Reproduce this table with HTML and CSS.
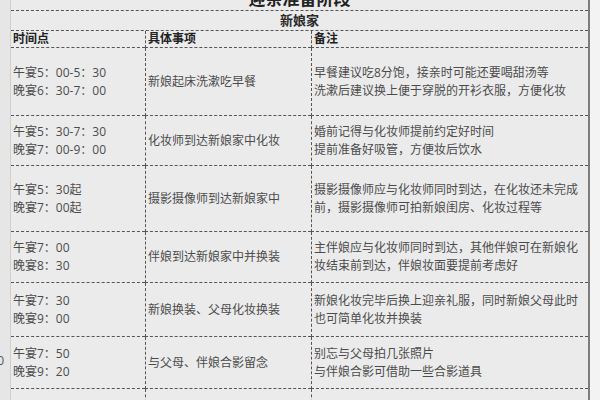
FILE: index.html
```html
<!DOCTYPE html>
<html lang="zh">
<head>
<meta charset="utf-8">
<link rel="stylesheet" href="styles.css">
</head>
<body>
<div class="sheet">
  <div class="gutter">
    <div class="rn-a"></div>
    <div class="rn-b">10</div>
  </div>
  <div class="table">
    <div class="title">迎亲准备阶段</div>
    <div class="place">新娘家</div>
    <div class="grid">
      <div class="cell head">时间点</div>
      <div class="cell head mid">具体事项</div>
      <div class="cell head mid">备注</div>

      <div class="cell">午宴5：00-5：30<br>晚宴6：30-7：00</div>
      <div class="cell mid">新娘起床洗漱吃早餐</div>
      <div class="cell mid">早餐建议吃8分饱，接亲时可能还要喝甜汤等<br>洗漱后建议换上便于穿脱的开衫衣服，方便化妆</div>

      <div class="cell">午宴5：30-7：30<br>晚宴7：00-9：00</div>
      <div class="cell mid">化妆师到达新娘家中化妆</div>
      <div class="cell mid">婚前记得与化妆师提前约定好时间<br>提前准备好吸管，方便妆后饮水</div>

      <div class="cell">午宴5：30起<br>晚宴7：00起</div>
      <div class="cell mid">摄影摄像师到达新娘家中</div>
      <div class="cell mid">摄影摄像师应与化妆师同时到达，在化妆还未完成<br>前，摄影摄像师可拍新娘闺房、化妆过程等</div>

      <div class="cell">午宴7：00<br>晚宴8：30</div>
      <div class="cell mid">伴娘到达新娘家中并换装</div>
      <div class="cell mid">主伴娘应与化妆师同时到达，其他伴娘可在新娘化<br>妆结束前到达，伴娘妆面要提前考虑好</div>

      <div class="cell">午宴7：30<br>晚宴9：00</div>
      <div class="cell mid">新娘换装、父母化妆换装</div>
      <div class="cell mid">新娘化妆完毕后换上迎亲礼服，同时新娘父母此时<br>也可简单化妆并换装</div>

      <div class="cell">午宴7：50<br>晚宴9：20</div>
      <div class="cell mid">与父母、伴娘合影留念</div>
      <div class="cell mid">别忘与父母拍几张照片<br>与伴娘合影可借助一些合影道具</div>

      <div class="cell"></div>
      <div class="cell mid"></div>
      <div class="cell mid"></div>
    </div>
  </div>
  <div class="edge"></div>
</div>
</body>
</html>
```

FILE: styles.css
```css
html, body {
  margin: 0;
  padding: 0;
  width: 600px;
  height: 400px;
  overflow: hidden;
  background: #efefef;
}

body {
  font-family: "Open Sans", "Noto Sans CJK SC", "Noto Sans", sans-serif;
  color: #4b4b4b;
  font-size: 12px;
}

.sheet {
  display: flex;
  height: 400px;
  overflow: hidden;
}

.gutter {
  width: 10px;
  flex: none;
  background: #e6e6e6;
  border-right: 1px solid #cfcfcf;
  overflow: hidden;
}

.rn-a {
  height: 352px;
}

.rn-b {
  height: 18px;
  line-height: 18px;
  font-size: 12px;
  color: #555;
  direction: rtl;
  padding-right: 6px;
  white-space: nowrap;
  overflow: hidden;
}

.table {
  width: 577px;
  flex: none;
  margin-top: -13px;
  background: #ebebeb;
  border-right: 2px solid #7c7c7c;
  display: flex;
  flex-direction: column;
}

.title {
  height: 23px;
  line-height: 23px;
  text-align: center;
  font-size: 17px;
  font-weight: 700;
  color: #222;
  border-bottom: 1px dashed #555;
}

.place {
  height: 19px;
  line-height: 19px;
  text-align: center;
  font-size: 13px;
  font-weight: 700;
  color: #2a2a2a;
  border-bottom: 1px dashed #555;
}

.grid {
  display: grid;
  grid-template-columns: 134px 166px 1fr;
  grid-template-rows: 17px 68px 50px 66px 51px 54px 52px 30px;
}

.cell {
  display: flex;
  align-items: center;
  padding-left: 2px;
  line-height: 18px;
  border-bottom: 1px dashed #555;
  white-space: nowrap;
}

.cell.mid {
  border-left: 1px dashed #555;
}

.cell.head {
  font-weight: 700;
  color: #222;
  font-size: 12px;
  line-height: 16px;
}

.edge {
  flex: 1;
  background: #f3f3f3;
}
```
